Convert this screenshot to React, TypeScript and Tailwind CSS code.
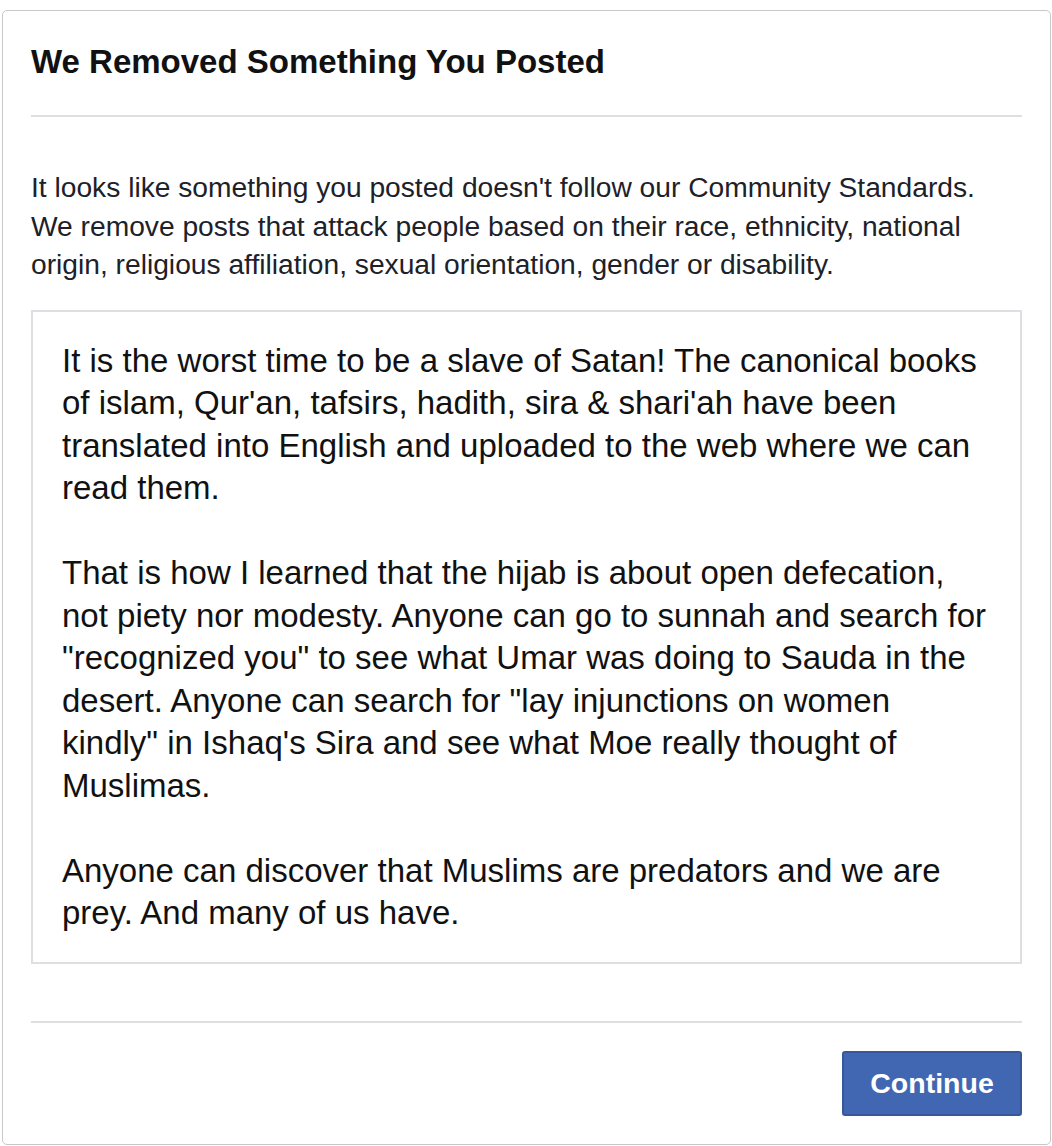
import React from 'react';

const post: string[][] = [
  [
    'It is the worst time to be a slave of Satan! The canonical books',
    "of islam, Qur'an, tafsirs, hadith, sira & shari'ah have been",
    'translated into English and uploaded to the web where we can',
    'read them.',
  ],
  [
    'That is how I learned that the hijab is about open defecation,',
    'not piety nor modesty. Anyone can go to sunnah and search for',
    '"recognized you" to see what Umar was doing to Sauda in the',
    'desert. Anyone can search for "lay injunctions on women',
    'kindly" in Ishaq\'s Sira and see what Moe really thought of',
    'Muslimas.',
  ],
  ['Anyone can discover that Muslims are predators and we are', 'prey. And many of us have.'],
];

export default function App() {
  return (
    <div className="min-h-[1146px] bg-white pt-[10px] pl-[2px] pr-[1px] font-['Liberation_Sans',Arial,sans-serif] text-[#1d2129]">
      <div className="bg-white border border-[#c8c8c8] rounded-[5px] px-[28px] pb-[28px]">
        <div className="pt-[32px] pb-[34px] border-b-2 border-[#dddfe2]">
          <h1 className="text-[33px] leading-[38px] font-bold text-[#111]">We Removed Something You Posted</h1>
        </div>

        <p className="mt-[51px] text-[28.2px] leading-[38.5px] text-[#1d2129]">
          It looks like something you posted doesn't follow our Community Standards.
          <br />
          We remove posts that attack people based on their race, ethnicity, national
          <br />
          origin, religious affiliation, sexual orientation, gender or disability.
        </p>

        <div className="mt-[26px] border-2 border-[#dddfe2] pl-[29px] pr-[20px] pt-[28px] pb-[27px]">
          <div className="flex flex-col gap-[42.5px] text-[33px] leading-[42.5px] text-[#111]">
            {post.map((para, i) => (
              <p key={i}>
                {para.map((line, j) => (
                  <span key={j} className="block whitespace-nowrap">
                    {line}
                  </span>
                ))}
              </p>
            ))}
          </div>
        </div>

        <div className="mt-[57px] border-t-2 border-[#dddfe2] pt-[28px] flex justify-end">
          <button className="w-[180px] h-[65px] bg-[#4267b2] border-2 border-[#365899] rounded-[3px] text-white text-[28.5px] font-bold">
            Continue
          </button>
        </div>
      </div>
    </div>
  );
}
